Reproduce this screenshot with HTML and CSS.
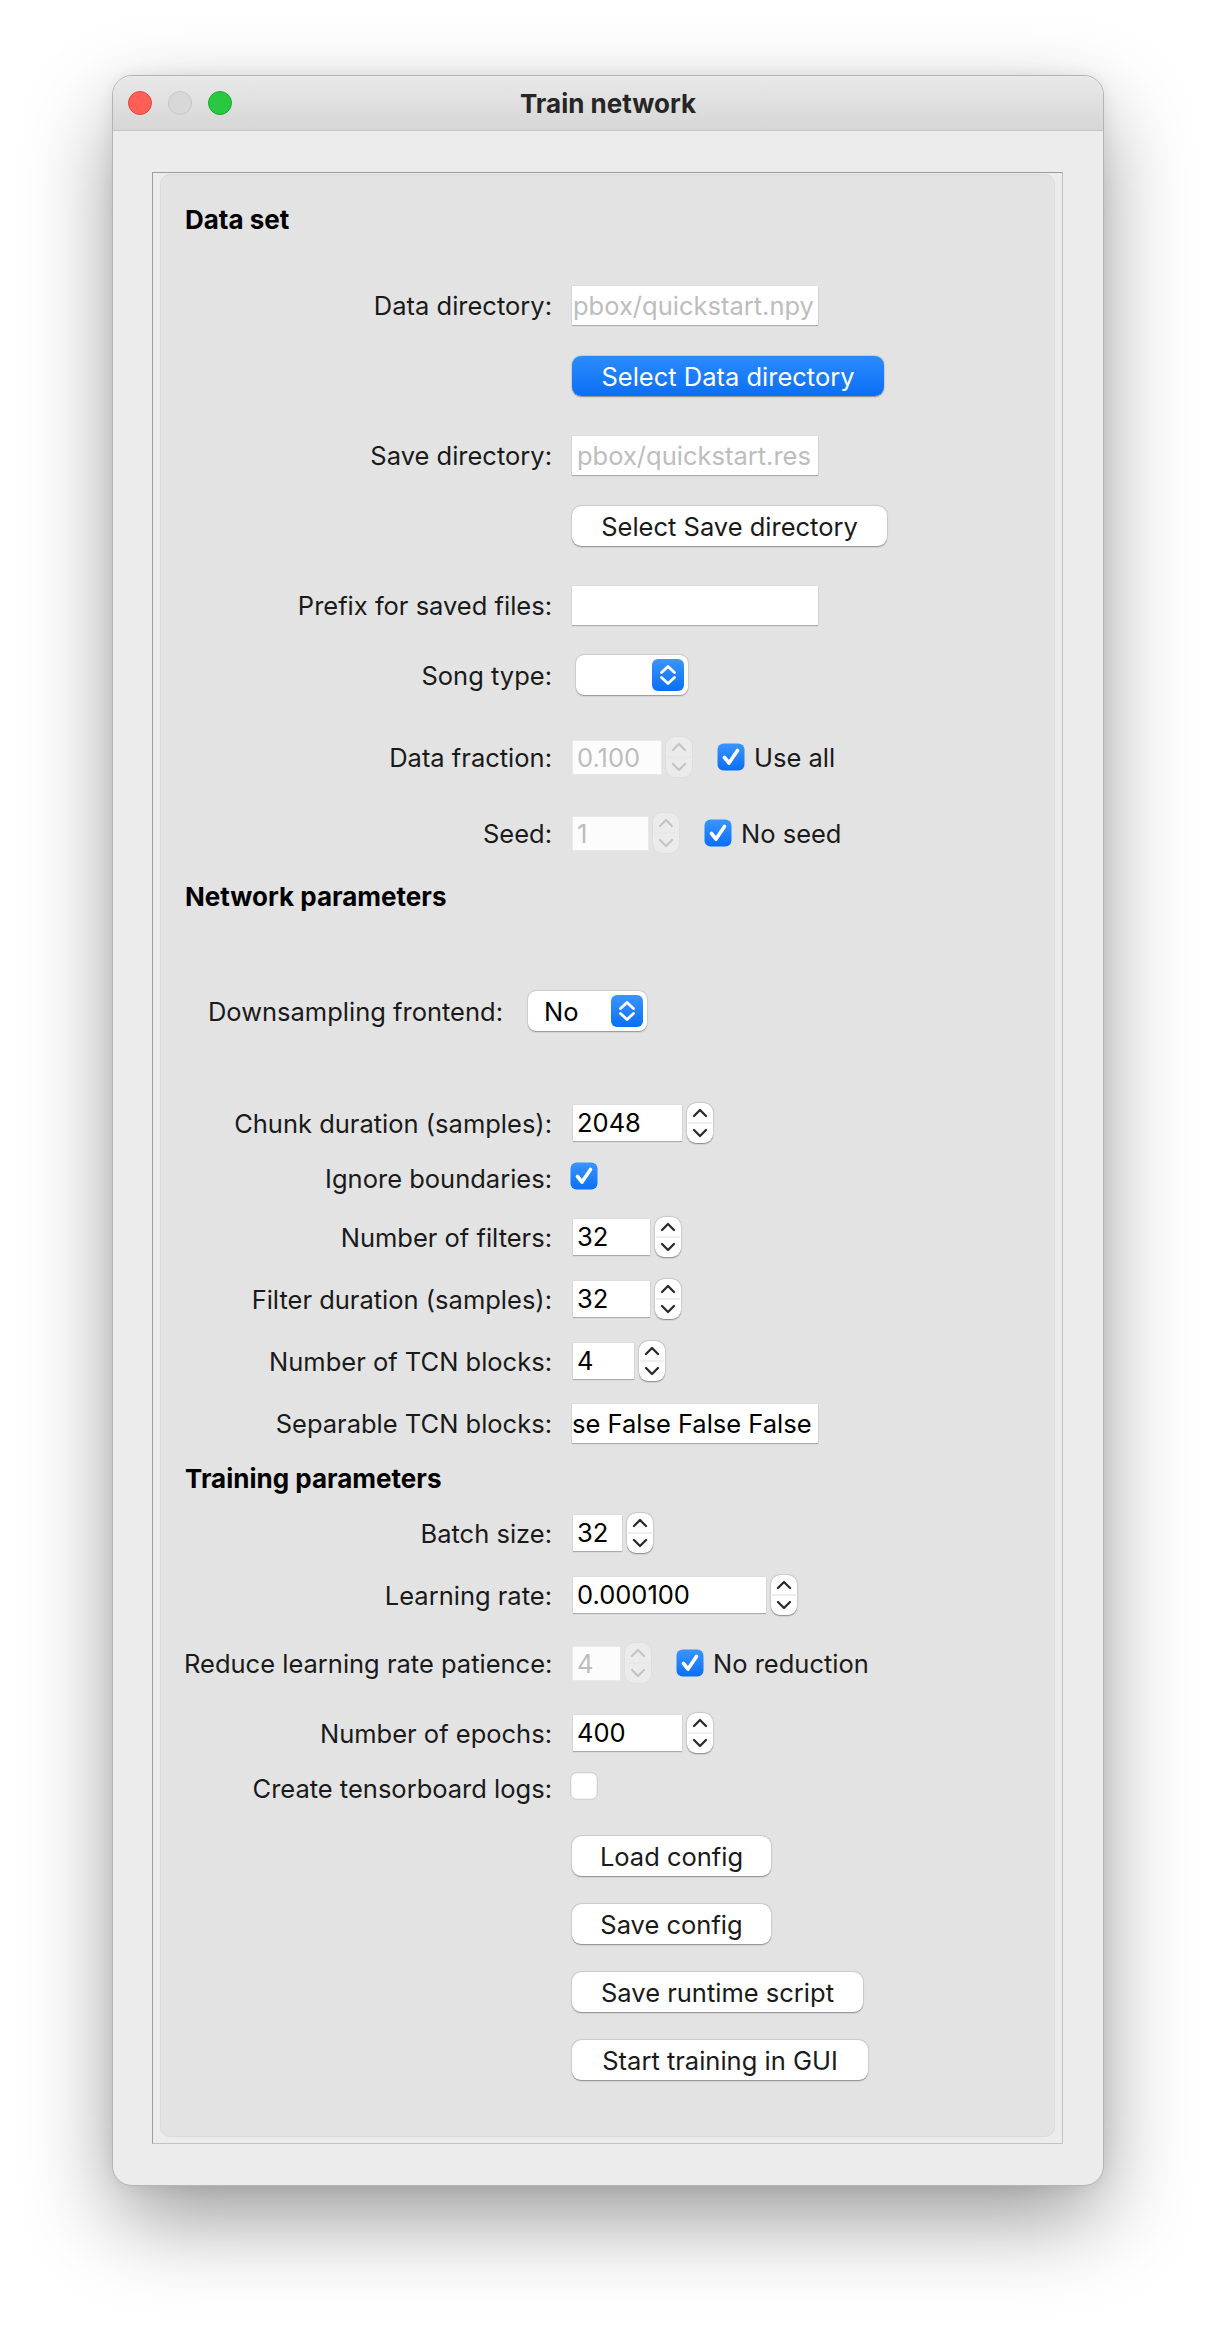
FILE: index.html
```html
<!DOCTYPE html>
<html>
<head>
<meta charset="utf-8">
<title>Train network</title>
<link rel="stylesheet" href="styles.css">
</head>
<body>
<div class="stage">
  <div class="window">
    <div class="titlebar">
      <div class="lights"><span class="light red"></span><span class="light gray"></span><span class="light green"></span></div>
      <div class="title">Train network</div>
      <div></div>
    </div>
    <div class="content">
      <div class="frame">
        <div class="panel">
          <div class="heading">Data set</div>

          <div class="row h39 mt50"><div class="lbl">Data directory:</div><div class="field path">pbox/quickstart.npy</div></div>
          <div class="row mt31"><div class="lbl"></div><div class="btn primary w312">Select Data directory</div></div>

          <div class="row h39 mt40"><div class="lbl">Save directory:</div><div class="field path shift">pbox/quickstart.res</div></div>
          <div class="row mt31"><div class="lbl"></div><div class="btn w315">Select Save directory</div></div>

          <div class="row h39 mt40"><div class="lbl">Prefix for saved files:</div><div class="field"></div></div>

          <div class="row mt30"><div class="lbl">Song type:</div>
            <div class="combo song"><span></span>
              <span class="arrows"><svg width="32" height="32" viewBox="0 0 32 32"><path d="M9.5 13.5 L16 7.5 L22.5 13.5 M9.5 18.5 L16 24.5 L22.5 18.5" fill="none" stroke="#fff" stroke-width="2.8" stroke-linecap="round" stroke-linejoin="round"/></svg></span>
            </div>
          </div>

          <div class="row mt42"><div class="lbl">Data fraction:</div>
            <div class="spin"><div class="num off w88">0.100</div>
              <div class="stepper off"><svg width="26" height="40" viewBox="0 0 26 40"><path d="M7 13 L13 7 L19 13 M7 27 L13 33 L19 27" fill="none" stroke="#c4c4c4" stroke-width="2.2" stroke-linecap="round" stroke-linejoin="round"/><line x1="1" y1="20" x2="25" y2="20" stroke="#e3e3e3" stroke-width="1"/></svg></div>
            </div>
            <span class="chk on"><svg width="28" height="28" viewBox="0 0 28 28"><defs><linearGradient id="cb1" x1="0" y1="0" x2="0" y2="1"><stop offset="0" stop-color="#3b95ff"/><stop offset="1" stop-color="#0a6ff5"/></linearGradient></defs><rect x="0.5" y="0.5" width="27" height="27" rx="6" fill="url(#cb1)"/><path d="M7.5 14.5 L12 20 L20.5 7.5" fill="none" stroke="#fff" stroke-width="3.6" stroke-linecap="round" stroke-linejoin="round"/></svg></span>
            <span class="chktext">Use all</span>
          </div>

          <div class="row mt36"><div class="lbl">Seed:</div>
            <div class="spin"><div class="num off w75">1</div>
              <div class="stepper off"><svg width="26" height="40" viewBox="0 0 26 40"><path d="M7 13 L13 7 L19 13 M7 27 L13 33 L19 27" fill="none" stroke="#c4c4c4" stroke-width="2.2" stroke-linecap="round" stroke-linejoin="round"/><line x1="1" y1="20" x2="25" y2="20" stroke="#e3e3e3" stroke-width="1"/></svg></div>
            </div>
            <span class="chk on"><svg width="28" height="28" viewBox="0 0 28 28"><rect x="0.5" y="0.5" width="27" height="27" rx="6" fill="url(#cb1)"/><path d="M7.5 14.5 L12 20 L20.5 7.5" fill="none" stroke="#fff" stroke-width="3.6" stroke-linecap="round" stroke-linejoin="round"/></svg></span>
            <span class="chktext">No seed</span>
          </div>

          <div class="heading mt28">Network parameters</div>

          <div class="row mt78"><div class="lbl narrow">Downsampling frontend:</div>
            <div class="combo down"><span>No</span>
              <span class="arrows"><svg width="32" height="32" viewBox="0 0 32 32"><path d="M9.5 13.5 L16 7.5 L22.5 13.5 M9.5 18.5 L16 24.5 L22.5 18.5" fill="none" stroke="#fff" stroke-width="2.8" stroke-linecap="round" stroke-linejoin="round"/></svg></span>
            </div>
          </div>

          <div class="row mt72"><div class="lbl">Chunk duration (samples):</div>
            <div class="spin"><div class="num w109">2048</div>
              <div class="stepper"><svg width="26" height="40" viewBox="0 0 26 40"><path d="M7 13 L13 7 L19 13 M7 27 L13 33 L19 27" fill="none" stroke="#2a2a2a" stroke-width="2.3" stroke-linecap="round" stroke-linejoin="round"/><line x1="1" y1="20" x2="25" y2="20" stroke="#e0e0e0" stroke-width="1"/></svg></div>
            </div>
          </div>

          <div class="row h32 mt19"><div class="lbl">Ignore boundaries:</div>
            <span class="chk on top"><svg width="28" height="28" viewBox="0 0 28 28"><rect x="0.5" y="0.5" width="27" height="27" rx="6" fill="url(#cb1)"/><path d="M7.5 14.5 L12 20 L20.5 7.5" fill="none" stroke="#fff" stroke-width="3.6" stroke-linecap="round" stroke-linejoin="round"/></svg></span>
          </div>

          <div class="row mt23"><div class="lbl">Number of filters:</div>
            <div class="spin"><div class="num w77">32</div>
              <div class="stepper"><svg width="26" height="40" viewBox="0 0 26 40"><path d="M7 13 L13 7 L19 13 M7 27 L13 33 L19 27" fill="none" stroke="#2a2a2a" stroke-width="2.3" stroke-linecap="round" stroke-linejoin="round"/><line x1="1" y1="20" x2="25" y2="20" stroke="#e0e0e0" stroke-width="1"/></svg></div>
            </div>
          </div>

          <div class="row mt22"><div class="lbl">Filter duration (samples):</div>
            <div class="spin"><div class="num w77">32</div>
              <div class="stepper"><svg width="26" height="40" viewBox="0 0 26 40"><path d="M7 13 L13 7 L19 13 M7 27 L13 33 L19 27" fill="none" stroke="#2a2a2a" stroke-width="2.3" stroke-linecap="round" stroke-linejoin="round"/><line x1="1" y1="20" x2="25" y2="20" stroke="#e0e0e0" stroke-width="1"/></svg></div>
            </div>
          </div>

          <div class="row mt22"><div class="lbl">Number of TCN blocks:</div>
            <div class="spin"><div class="num w61">4</div>
              <div class="stepper"><svg width="26" height="40" viewBox="0 0 26 40"><path d="M7 13 L13 7 L19 13 M7 27 L13 33 L19 27" fill="none" stroke="#2a2a2a" stroke-width="2.3" stroke-linecap="round" stroke-linejoin="round"/><line x1="1" y1="20" x2="25" y2="20" stroke="#e0e0e0" stroke-width="1"/></svg></div>
            </div>
          </div>

          <div class="row h39 mt23"><div class="lbl">Separable TCN blocks:</div><div class="field path dark">se False False False</div></div>

          <div class="heading mt20">Training parameters</div>

          <div class="row mt18"><div class="lbl">Batch size:</div>
            <div class="spin"><div class="num w49">32</div>
              <div class="stepper"><svg width="26" height="40" viewBox="0 0 26 40"><path d="M7 13 L13 7 L19 13 M7 27 L13 33 L19 27" fill="none" stroke="#2a2a2a" stroke-width="2.3" stroke-linecap="round" stroke-linejoin="round"/><line x1="1" y1="20" x2="25" y2="20" stroke="#e0e0e0" stroke-width="1"/></svg></div>
            </div>
          </div>

          <div class="row mt22"><div class="lbl">Learning rate:</div>
            <div class="spin"><div class="num w193">0.000100</div>
              <div class="stepper"><svg width="26" height="40" viewBox="0 0 26 40"><path d="M7 13 L13 7 L19 13 M7 27 L13 33 L19 27" fill="none" stroke="#2a2a2a" stroke-width="2.3" stroke-linecap="round" stroke-linejoin="round"/><line x1="1" y1="20" x2="25" y2="20" stroke="#e0e0e0" stroke-width="1"/></svg></div>
            </div>
          </div>

          <div class="row mt28"><div class="lbl">Reduce learning rate patience:</div>
            <div class="spin"><div class="num off w47">4</div>
              <div class="stepper off"><svg width="26" height="40" viewBox="0 0 26 40"><path d="M7 13 L13 7 L19 13 M7 27 L13 33 L19 27" fill="none" stroke="#c4c4c4" stroke-width="2.2" stroke-linecap="round" stroke-linejoin="round"/><line x1="1" y1="20" x2="25" y2="20" stroke="#e3e3e3" stroke-width="1"/></svg></div>
            </div>
            <span class="chk on"><svg width="28" height="28" viewBox="0 0 28 28"><rect x="0.5" y="0.5" width="27" height="27" rx="6" fill="url(#cb1)"/><path d="M7.5 14.5 L12 20 L20.5 7.5" fill="none" stroke="#fff" stroke-width="3.6" stroke-linecap="round" stroke-linejoin="round"/></svg></span>
            <span class="chktext">No reduction</span>
          </div>

          <div class="row mt30"><div class="lbl">Number of epochs:</div>
            <div class="spin"><div class="num w109">400</div>
              <div class="stepper"><svg width="26" height="40" viewBox="0 0 26 40"><path d="M7 13 L13 7 L19 13 M7 27 L13 33 L19 27" fill="none" stroke="#2a2a2a" stroke-width="2.3" stroke-linecap="round" stroke-linejoin="round"/><line x1="1" y1="20" x2="25" y2="20" stroke="#e0e0e0" stroke-width="1"/></svg></div>
            </div>
          </div>

          <div class="row h32 mt19"><div class="lbl">Create tensorboard logs:</div>
            <span class="chk top"><svg width="28" height="28" viewBox="0 0 28 28"><rect x="0.75" y="0.75" width="26.5" height="26.5" rx="6" fill="#fff" stroke="#c9c9c9" stroke-width="1"/></svg></span>
          </div>

          <div class="row mt32"><div class="lbl"></div><div class="btn w199">Load config</div></div>
          <div class="row mt28"><div class="lbl"></div><div class="btn w199">Save config</div></div>
          <div class="row mt28"><div class="lbl"></div><div class="btn w291">Save runtime script</div></div>
          <div class="row mt28"><div class="lbl"></div><div class="btn w296">Start training in GUI</div></div>
        </div>
      </div>
    </div>
  </div>
</div>
</body>
</html>
```

FILE: styles.css
```css
html, body {
  margin: 0;
  background: #ffffff;
}

body {
  font-family: Inter, "Liberation Sans", sans-serif;
  font-size: 25.5px;
  color: #1a1a1a;
}

.stage {
  min-height: 2334px;
  box-sizing: border-box;
  padding: 75px 0 0 112px;
}

.window {
  width: 992px;
  height: 2111px;
  box-sizing: border-box;
  border-radius: 20px;
  background: #ececec;
  border: 1px solid #b4b4b4;
  box-shadow: 0 35px 90px -5px rgba(0, 0, 0, 0.42), 0 0 16px rgba(0, 0, 0, 0.08);
  display: flex;
  flex-direction: column;
  overflow: hidden;
}

.titlebar {
  height: 54px;
  flex-shrink: 0;
  border-bottom: 1px solid #c4c4c4;
  background: linear-gradient(#e9e9e9, #d6d6d6);
  display: grid;
  grid-template-columns: 1fr auto 1fr;
  align-items: center;
}

.lights {
  display: flex;
  gap: 16px;
  padding-left: 15px;
}

.light {
  width: 24px;
  height: 24px;
  border-radius: 50%;
  box-sizing: border-box;
}

.red { background: #ff5f57; border: 1px solid #e2463f; }
.gray { background: #d8d8d8; border: 1px solid #c5c5c5; }
.green { background: #28c840; border: 1px solid #1fa934; }

.title {
  font-weight: 700;
  font-size: 26px;
  color: #262626;
}

.content {
  flex: 1;
  min-height: 0;
  padding: 41px 40px 41px 39px;
}

.frame {
  height: 100%;
  box-sizing: border-box;
  border: 1px solid;
  border-color: #9d9d9d #c2c2c2 #c2c2c2 #9d9d9d;
  padding: 1px 7px 6px 7px;
}

.panel {
  height: 100%;
  box-sizing: border-box;
  border-radius: 10px;
  background: #e3e3e3;
  border: 1px solid #dadada;
  padding: 29px 0 0 23px;
  display: flex;
  flex-direction: column;
  align-items: flex-start;
}

.heading {
  font-weight: 700;
  font-size: 26px;
  color: #000;
  height: 32px;
  line-height: 32px;
  padding-left: 1px;
  flex-shrink: 0;
}

.row {
  display: flex;
  align-items: center;
  height: 40px;
  flex-shrink: 0;
}

.h39 { height: 39px; }
.h32 { height: 32px; }

.mt18 { margin-top: 18px; }
.mt19 { margin-top: 19px; }
.mt20 { margin-top: 20px; }
.mt22 { margin-top: 22px; }
.mt23 { margin-top: 23px; }
.mt28 { margin-top: 28px; }
.mt30 { margin-top: 30px; }
.mt31 { margin-top: 31px; }
.mt32 { margin-top: 32px; }
.mt36 { margin-top: 36px; }
.mt40 { margin-top: 40px; }
.mt42 { margin-top: 42px; }
.mt50 { margin-top: 50px; }
.mt72 { margin-top: 72px; }
.mt78 { margin-top: 78px; }

.lbl {
  width: 368px;
  margin-right: 20px;
  text-align: right;
  white-space: nowrap;
  flex-shrink: 0;
}

.lbl.narrow {
  width: 319px;
  margin-right: 25px;
}

.field {
  width: 246px;
  height: 39px;
  box-sizing: border-box;
  background: #fff;
  box-shadow: 0 1px 1px rgba(0, 0, 0, 0.22), 0 0 0 0.5px rgba(0, 0, 0, 0.06);
}

.path {
  display: flex;
  align-items: center;
  overflow: hidden;
  white-space: nowrap;
  padding-left: 1px;
  color: #bdbdbd;
}

.path.shift {
  padding-left: 5px;
}

.path.dark {
  color: #000;
  padding-left: 0;
}

.spin {
  display: flex;
  align-items: center;
  gap: 5px;
  margin-left: 1px;
}

.num {
  height: 36px;
  line-height: 36px;
  box-sizing: border-box;
  padding-left: 4px;
  background: #fff;
  color: #000;
  box-shadow: 0 1px 1px rgba(0, 0, 0, 0.22), 0 0 0 0.5px rgba(0, 0, 0, 0.06);
  overflow: hidden;
}

.num.off {
  height: 33px;
  line-height: 33px;
  color: #bdbdbd;
  background: #fcfcfc;
  box-shadow: 0 0 0 1px #e8e8e8;
}

.w47 { width: 47px; }
.w49 { width: 49px; }
.w61 { width: 61px; }
.w75 { width: 75px; }
.w77 { width: 77px; }
.w88 { width: 88px; }
.w109 { width: 109px; }
.w193 { width: 193px; }

.stepper {
  width: 26px;
  height: 40px;
  border-radius: 9px;
  background: #fff;
  box-shadow: 0 0.5px 1.5px rgba(0, 0, 0, 0.4), 0 0 0 0.5px rgba(0, 0, 0, 0.06);
}

.stepper.off {
  background: #ebebeb;
  box-shadow: 0 0 0 1px #dedede;
}

.stepper svg, .chk svg, .arrows svg {
  display: block;
}

.chk {
  width: 28px;
  height: 28px;
  margin-left: 25px;
  flex-shrink: 0;
}

.chk.top {
  align-self: flex-start;
  margin-left: -2px;
}

.chktext {
  margin-left: 9px;
  color: #1a1a1a;
}

.combo {
  display: flex;
  align-items: center;
  justify-content: space-between;
  height: 40px;
  box-sizing: border-box;
  border-radius: 8px;
  background: #fff;
  color: #000;
  padding: 0 4px 0 16px;
  box-shadow: 0 0.5px 1.5px rgba(0, 0, 0, 0.35), 0 0 0 0.5px rgba(0, 0, 0, 0.06);
}

.combo.song {
  width: 112px;
  margin-left: 4px;
}

.combo.down {
  width: 119px;
}

.arrows {
  width: 32px;
  height: 32px;
  border-radius: 6px;
  background: linear-gradient(#3b95ff, #0a6ff5);
}

.btn {
  height: 40px;
  box-sizing: border-box;
  border-radius: 9px;
  background: #fff;
  color: #1a1a1a;
  display: flex;
  align-items: center;
  justify-content: center;
  white-space: nowrap;
  box-shadow: 0 0.5px 1.5px rgba(0, 0, 0, 0.38), 0 0 0 0.5px rgba(0, 0, 0, 0.06);
}

.btn.primary {
  background: linear-gradient(#2c8bfe, #0b6ff4);
  color: #fff;
}

.w312 { width: 312px; }
.w315 { width: 315px; }
.w199 { width: 199px; }
.w291 { width: 291px; }
.w296 { width: 296px; }
```
